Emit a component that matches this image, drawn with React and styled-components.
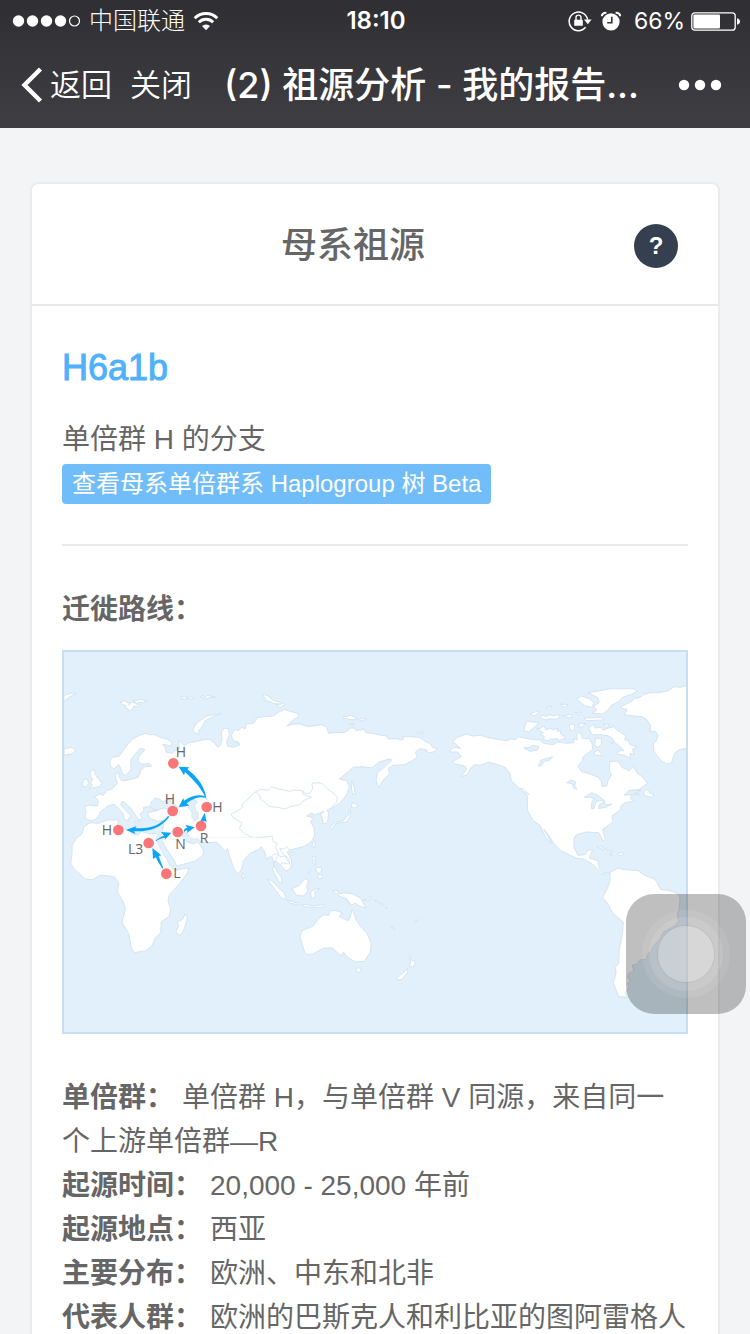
import React from "react";
import styled, { createGlobalStyle } from "styled-components";

const GlobalStyle = createGlobalStyle`
  * { box-sizing: border-box; }
  body {
    margin: 0;
    background: #f3f4f6;
    color: #666;
    font-family: "Liberation Sans", "Noto Sans CJK SC", sans-serif;
  }
  button { border: 0; padding: 0; margin: 0; background: none; color: inherit; font: inherit; cursor: pointer; }
  h1, h2, h3, p, dl, dd { margin: 0; }
`;

const Screen = styled.div`
  display: flex;
  flex-direction: column;
  height: 100vh;
`;

const TopBar = styled.header`
  flex: none;
  color: #fff;
  background: linear-gradient(#2f2e32, #3f3e42);
  font-family: Inter, "Noto Sans CJK SC", sans-serif;
`;

const StatusBar = styled.div`
  display: grid;
  grid-template-columns: 1fr auto 1fr;
  align-items: center;
  height: 42px;
  padding: 0 10px 0 12px;
  font-size: 24px;
  line-height: 42px;
`;

const StatusGroup = styled.div`
  display: flex;
  align-items: center;
  justify-content: ${(p) => (p.$end ? "flex-end" : "flex-start")};
  gap: 8px;
`;

const Carrier = styled.span`
  font-size: 24px;
  font-weight: 300;
`;

const Clock = styled.time`
  font-weight: 600;
`;

const Percent = styled.span`
  margin: 0 -2px 0 4px;
  font-size: 23px;
`;

const NavBar = styled.nav`
  display: flex;
  align-items: center;
  height: 86px;
  padding: 0 28px 0 20px;
`;

const NavButton = styled.button`
  display: flex;
  align-items: center;
  gap: 6px;
  flex: none;
  font-size: 31px;
  font-weight: 350;
  line-height: 44px;
  margin-right: 18px;
`;

const NavTitle = styled.h1`
  flex: 1;
  min-width: 0;
  margin-left: 14px;
  font-size: 36px;
  font-weight: 500;
  line-height: 44px;
  white-space: nowrap;
`;

const MoreButton = styled.button`
  display: flex;
  flex: none;
`;

const Content = styled.main`
  flex: 1;
  min-height: 0;
  overflow-y: auto;
  scrollbar-width: none;
  padding: 54px 30px;
`;

const Card = styled.article`
  background: #fff;
  border: 2px solid #ebebeb;
  border-radius: 8px;
`;

const CardHeader = styled.header`
  display: flex;
  align-items: center;
  height: 122px;
  padding: 4px 40px 0;
  border-bottom: 2px solid #e8e8e8;
`;

const CardTitle = styled.h2`
  flex: 1;
  text-align: center;
  font-size: 36px;
  font-weight: 500;
  line-height: 44px;
`;

const HelpButton = styled.button`
  width: 44px;
  height: 44px;
  border-radius: 50%;
  background: #353f4f;
  color: #fff;
  font-family: "Liberation Sans", sans-serif;
  font-size: 24px;
  font-weight: 700;
  line-height: 44px;
`;

const CardBody = styled.div`
  padding: 40px 30px;
  font-size: 28px;
  line-height: 44px;
`;

const Haplogroup = styled.h3`
  margin-bottom: 28px;
  color: #4fb1fa;
  font-size: 36px;
  font-weight: 400;
  line-height: 44px;
  -webkit-text-stroke: 1px #4fb1fa;
`;

const TreeLink = styled.a`
  display: block;
  width: fit-content;
  margin-top: 2px;
  padding: 0 10px;
  border-radius: 4px;
  background: #70bdf9;
  color: #fff;
  font-size: 24px;
  line-height: 40px;
  text-decoration: none;
`;

const Divider = styled.hr`
  height: 2px;
  margin: 40px 0 42px;
  border: 0;
  background: #ebebeb;
`;

const SectionTitle = styled.h3`
  margin-bottom: 18px;
  font-size: 28px;
  font-weight: 700;
  line-height: 44px;
`;

const MapFrame = styled.figure`
  margin: 0 0 42px;
  border: 2px solid #c9dff1;
  background: #e1f0fb;

  svg { display: block; width: 100%; height: auto; }
`;

const Term = styled.dt`
  display: inline;
  margin-right: 8px;
  font-weight: 700;
`;

const Detail = styled.dd`
  display: inline;
`;

const TouchButton = styled.button`
  position: fixed;
  right: 4px;
  bottom: 320px;
  width: 120px;
  height: 120px;
  border-radius: 28px;
  background: rgba(0, 0, 0, 0.25);

  svg { display: block; }
`;

const SignalDots = () => (
  <svg width="69" height="14" viewBox="0 0 69 14" fill="#fff" aria-hidden="true">
    <circle cx="6.5" cy="7" r="5.7" />
    <circle cx="20.5" cy="7" r="5.7" />
    <circle cx="34.5" cy="7" r="5.7" />
    <circle cx="48.5" cy="7" r="5.7" />
    <circle cx="62.5" cy="7" r="5" fill="none" stroke="#fff" strokeWidth="1.2" />
  </svg>
);

const WifiIcon = () => (
  <svg width="26" height="20" viewBox="0 0 26 20" fill="none" stroke="#fff" strokeWidth="2.9" aria-hidden="true">
    <path d="M1.7 7.2a16 16 0 0 1 22.6 0" />
    <path d="M5.8 11.3a10.2 10.2 0 0 1 14.4 0" />
    <path d="M13 19.2l-4-4.1a5.7 5.7 0 0 1 8 0z" fill="#fff" stroke="none" />
  </svg>
);

const RotationLockIcon = () => (
  <svg width="24" height="22" viewBox="0 0 24 22" fill="none" stroke="#fff" aria-hidden="true">
    <path d="M17.6 17.3A9.3 9.3 0 1 1 19.6 9.6" strokeWidth="1.5" />
    <path d="M16 9.6h7.6l-3.8 4.6z" fill="#fff" stroke="none" />
    <rect x="6.2" y="9.8" width="8.6" height="6" rx="0.6" fill="#fff" stroke="none" />
    <path d="M8 10V7.6a2.5 2.5 0 0 1 5 0V10" strokeWidth="1.4" />
  </svg>
);

const AlarmIcon = () => (
  <svg width="22" height="20" viewBox="0 0 22 20" fill="none" stroke="#fff" aria-hidden="true">
    <circle cx="11" cy="10.8" r="8.6" fill="#fff" stroke="none" />
    <path d="M1.8 5.3Q2 1.6 6.4 1.7M20.2 5.3Q20 1.6 15.6 1.7" strokeWidth="2" />
    <path d="M11.8 5.8v6H7.2" stroke="#333236" strokeWidth="1.6" />
  </svg>
);

const BatteryIcon = () => (
  <svg width="49" height="19" viewBox="0 0 49 19" aria-hidden="true">
    <rect x="0.8" y="0.8" width="43.4" height="17.4" rx="3" fill="none" stroke="#fff" strokeWidth="1.3" />
    <rect x="2.4" y="2.4" width="26.6" height="14.2" rx="1" fill="#fff" />
    <path d="M46 6.2q3 .8 3 3.3t-3 3.3z" fill="#fff" />
  </svg>
);

const BackIcon = () => (
  <svg width="24" height="38" viewBox="0 0 24 38" fill="none" stroke="#fff" strokeWidth="4.4" aria-hidden="true">
    <path d="M20.5 3L4.5 19l16 16" />
  </svg>
);

const MoreIcon = () => (
  <svg width="44" height="12" viewBox="0 0 44 12" fill="#fff" aria-hidden="true">
    <circle cx="6" cy="6" r="5.2" />
    <circle cx="22" cy="6" r="5.2" />
    <circle cx="38" cy="6" r="5.2" />
  </svg>
);

const EURASIA =
  "M75 535L78 515 73 500 88 495 112 498 115 482 104 470 118 462 130 466 140 452 158 446 172 430 166 412 168 400 175 398 178 412 185 422 205 420 235 412 244 388 255 380 275 378 268 370 245 373 234 362 236 350 250 336 254 328 240 325 228 340 213 358 212 372 214 385 208 396 196 406 188 402 181 382 176 374 163 386 151 380 150 362 158 352 178 348 190 332 203 312 222 294 240 286 256 280 268 284 285 284 300 292 322 298 337 308 332 318 308 312 316 324 318 336 336 340 345 332 358 326 356 302 364 308 372 318 388 308 410 304 436 298 450 298 462 308 474 322 482 314 486 300 484 276 494 264 506 266 508 286 500 305 502 318 520 322 540 314 532 304 538 310 518 300 514 285 526 268 534 272 545 262 556 266 558 252 580 250 590 238 586 234 610 230 640 228 660 214 668 212 672 208 690 214 714 220 716 230 700 240 680 258 700 252 720 252 745 260 770 256 786 254 800 262 806 280 830 277 852 278 864 272 868 264 884 264 888 272 912 268 918 278 936 280 960 285 980 288 984 297 1010 296 1024 300 1030 298 1028 290 1050 290 1078 292 1092 302 1112 312 1118 322 1132 326 1122 336 1104 338 1100 330 1080 326 1066 336 1072 352 1050 366 1034 374 1000 376 986 384 988 402 970 420 956 442 948 422 952 398 968 386 996 360 990 356 972 362 956 366 936 384 910 380 880 382 838 417 860 422 868 440 862 460 850 478 836 492 822 500 802 510 806 520 804 540 800 550 790 552 786 532 782 522 792 514 776 520 762 526 756 518 740 528 760 534 752 546 762 564 764 584 758 600 745 612 730 620 705 626 690 630 682 636 694 658 696 675 686 690 676 692 668 682 654 668 644 662 640 672 652 696 664 712 666 732 656 724 646 704 638 690 642 672 636 650 624 652 620 660 614 636 604 620 596 628 570 640 550 662 547 682 540 694 532 703 520 682 506 640 503 626 494 634 480 616 468 606 444 608 424 606 414 596 398 598 380 580 368 576 366 588 380 604 398 612 412 606 420 614 432 634 426 648 404 664 350 678 344 664 328 640 306 604 300 590 308 574 310 556 308 541 294 544 268 534 262 518 292 512 288 504 268 500 250 502 252 512 240 522 248 536 236 540 224 522 212 504 192 486 186 484 182 494 206 520 214 528 204 536 206 544 192 538 190 522 172 502 162 492 140 500 132 508 120 516 116 528 104 540 90 542 Z";

const AFRICA =
  "M90 548L116 550 142 540 176 540 172 556 190 566 210 572 216 582 236 584 244 574 270 582 288 580 294 586 288 598 310 640 334 682 344 692 368 686 388 684 380 702 360 730 328 764 324 784 332 806 328 828 304 846 302 878 286 894 276 918 258 932 224 938 214 924 206 880 186 848 196 808 190 786 172 756 176 728 164 712 148 708 120 706 96 720 74 716 42 686 32 672 36 640 36 616 50 594 66 582 72 560 Z";

const OLD_WORLD_ISLANDS = [
  "M375 822L382 832 376 858 366 882 354 886 348 874 356 858 352 846 368 838Z",
  "M92 392L104 388 106 404 118 420 126 430 118 440 88 446 98 436 92 430 98 416 90 408Z",
  "M70 420L82 416 86 430 80 440 66 440Z",
  "M12 326L36 322 46 332 34 342 12 346Z",
  "M12 166L34 160 50 160 30 170 12 184Z",
  "M180 184L188 186 194 180 200 188 206 186 208 196 214 186 226 190 232 194 242 196 236 200 222 198 218 206 208 214 204 206 194 202 198 196 186 194ZM218 180L228 182 240 178 246 180 262 182 250 188 240 186 230 190Z",
  "M398 272L404 258 414 246 440 228 486 220 460 230 438 240 424 262 416 272 418 284 408 280Z",
  "M608 168L614 164 628 170 634 178 642 182 662 186 656 192 640 190 628 184 612 182 618 176Z",
  "M646 192L658 194 670 190 674 196 660 202Z",
  "M850 228L862 230 870 226 882 230 892 236 876 240 862 236 850 236ZM896 238L908 236 920 238 914 242 898 242ZM868 252L882 252 874 256Z",
  "M362 172L374 168 378 174 390 170 404 174 396 178 384 176 372 178ZM420 170L430 166 434 172 444 166 468 172 452 172 440 176 430 174Z",
  "M1072 276L1092 276 1088 280 1074 280Z",
  "M876 424L882 438 886 464 878 462 874 444Z",
  "M876 488L896 496 884 504 874 502Z",
  "M872 508L870 530 860 546 842 548 826 552 816 568 810 562 824 548 850 542 866 524 868 508Z",
  "M758 608L766 602 764 622 756 620Z",
  "M696 636L704 640 700 646 694 642Z",
  "M548 698L554 706 552 714 546 712Z",
  "M758 650L766 648 764 666 768 676 758 668ZM766 684L784 682 784 694 774 702ZM774 706L788 704 786 716 772 714ZM744 696L754 688 746 704Z",
  "M622 718L636 722 654 742 672 758 680 778 664 774 640 742Z",
  "M680 780L700 786 718 790 716 794 690 790Z",
  "M724 795L740 793 756 798 776 796 792 794 788 802 756 802 734 800Z",
  "M696 746L718 736 734 716 746 722 740 740 744 752 730 768 710 766Z",
  "M752 756L766 746 782 744 764 754 766 770 754 776Z",
  "M818 752L832 750 836 762 852 758 878 762 902 774 910 790 918 804 896 798 886 790 872 796 862 778 838 768Z",
  "M908 780L924 776 930 768 934 774 922 782ZM944 780L952 782 958 788 952 788ZM962 790L972 794 982 804 974 802Z",
  "M992 858L1006 868 1002 870ZM1064 846L1076 838 1072 846Z",
  "M876 808L884 824 888 840 904 862 920 878 930 900 934 912 930 938 916 960 914 964 888 966 862 952 850 936 844 948 834 940 818 924 792 924 758 942 742 944 734 938 720 890 726 872 760 858 774 838 790 824 806 826 812 812 828 812 846 818 838 830 864 842 870 834Z",
  "M888 984L904 984 900 996 892 998Z",
  "M1048 950L1056 962 1068 964 1060 982 1048 978 1052 966Z",
  "M1008 1016L1032 996 1044 984 1042 998 1026 1018 1010 1020Z",
  "M224 546L236 542 238 548 226 550ZM300 546L308 542 304 548Z",
];

const SEAS = [
  "M270 498L274 486 286 474 300 478 308 486 318 480 324 476 334 484 352 500 354 508 334 510 314 504 292 510 278 508Z",
  "M386 488L398 478 412 484 404 496 406 510 414 518 414 536 404 542 396 532 396 516 386 504Z",
];

const BORDERS =
  "M513 522L530 514 548 502 546 492 556 486 574 466 586 456 602 448 616 450 626 450 634 440 652 446 690 454 700 450 728 452 734 460 750 460 758 446 756 430 770 428 786 430 800 444 816 456 832 470 830 486 816 500M586 456L598 464 602 478 616 488 630 500 652 502 676 507 690 500 720 494 730 482 744 476 756 472 730 464 728 452M513 522L520 534 546 548 538 566 552 580 576 592 600 592 626 590 636 588 640 606 652 610 646 622 656 640 648 660M664 634L660 626 674 626 682 620 690 630M636 646L652 640 660 650 678 648 680 660 690 668M664 634L672 646 686 656 690 676M662 676L666 668 682 672 690 666";

const TILE_SEAM = "M364 593L590 593";

const AMERICA_NORTH =
  "M30 270L44 262 62 265 38 245 52 232 80 222 98 228 122 226 150 234 200 242 214 236 226 240 236 230 262 236 300 240 310 250 340 254 352 246 380 250 402 248 400 236 412 240 410 224 420 216 428 236 448 236 456 250 458 268 430 290 426 304 414 318 424 334 450 342 476 352 484 364 486 380 500 378 504 362 514 346 508 330 510 304 534 304 546 322 568 332 580 318 592 340 606 350 622 370 598 388 572 392 552 406 574 400 572 416 584 424 556 428 544 436 540 450 516 468 520 486 488 508 496 538 490 544 476 518 440 516 410 524 402 534 402 562 414 586 434 584 444 570 458 570 448 594 474 602 478 628 490 640 508 636 506 642 484 642 460 614 434 598 408 594 362 572 340 548 322 520 312 508 330 540 336 552 316 530 300 496 280 482 262 450 262 408 240 386 214 362 210 340 196 322 166 312 146 306 122 316 104 314 94 322 82 344 62 350 80 328 74 318 46 312 38 304 64 290 52 276 32 276Z";

const NORTH_ISLANDS = [
  "M744 76L720 82 702 80 684 92 656 98 630 98 610 104 600 112 582 116 578 122 540 142 562 150 552 164 580 168 606 170 622 180 632 198 630 216 646 214 654 226 650 240 640 252 642 276 662 300 678 312 694 310 704 280 716 270 744 264Z",
  "M444 98L480 92 512 86 580 86 592 94 572 104 548 112 534 126 514 136 504 150 488 162 456 160 470 150 460 138 478 128 472 112Z",
  "M410 118L424 108 448 116 462 128 456 142 436 138Z",
  "M432 174L488 172 490 180 440 182ZM406 158L422 158 418 166Z",
  "M270 162L290 154 300 154 284 168ZM300 168L312 166 318 170 330 164 340 168 356 164 358 174 344 178 330 176 318 180 304 176ZM360 132L384 134 374 142ZM318 142L336 138 326 148ZM364 166L378 168 390 162 398 174 378 172Z",
  "M256 192L262 184 298 188 284 200 266 216 252 212Z",
  "M290 206L300 206 312 198 318 210 330 204 340 210 352 204 352 214 362 212 362 222 378 234 358 242 350 236 332 238 324 242 306 238 314 230 300 224 310 218Z",
  "M386 194L402 192 404 206 394 214ZM414 192L436 190 424 204Z",
  "M446 204L460 192 466 204 482 202 490 210 500 206 520 200 534 212 558 228 554 238 566 244 570 254 592 260 578 268 582 284 570 280 570 296 554 286 530 282 540 272 552 272 536 256 524 248 518 236 506 228 484 224 456 224Z",
  "M466 236L484 234 484 252 476 262 464 258ZM462 276L474 270 488 286 466 286ZM508 246L520 246 516 252ZM488 192L510 194 500 202Z",
  "M610 400L620 388 628 398 642 404 636 412 616 408Z",
  "M470 560L484 560 496 566 486 568ZM500 570L518 574 508 578ZM536 578L552 580 546 588 534 584ZM508 582L518 584 510 588Z",
  "M240 386L250 386 268 404 258 400Z",
];

const NORTH_LAKES = [
  "M252 264L270 262 278 256 296 260 292 270 270 274Z",
  "M294 318L304 300 338 290 330 300 314 304 304 316Z",
  "M380 368L394 360 408 366 404 376 410 388 400 384 398 372Z",
  "M432 412L456 398 476 408 496 424 480 422 468 424 462 446 454 446 456 424 464 416 450 412ZM478 434L492 426 498 434 516 432 498 442 476 446Z",
  "M556 404L566 392 584 390 604 392 584 400 600 404Z",
];

const AMERICA_SOUTH =
  "M150 126L160 122 174 114 186 118 234 122 254 136 280 146 288 152 302 178 330 182 356 192 360 204 358 236 352 252 356 276 340 290 310 306 300 326 278 352 274 364 264 372 258 388 240 390 232 402 216 406 222 424 206 430 202 440 210 452 202 462 208 468 196 490 204 502 176 500 160 458 168 430 166 412 176 400 178 358 186 320 190 276 158 250 146 226 128 202 140 180 150 154Z";

const STOPS = [
  { label: "H", x: 340, y: 370, tx: 347, ty: 352 },
  { label: "H", x: 338, y: 513, tx: 314, ty: 492 },
  { label: "H", x: 440, y: 501, tx: 457, ty: 516 },
  { label: "H", x: 175, y: 570, tx: 125, ty: 585 },
  { label: "R", x: 423, y: 558, tx: 419, ty: 610 },
  { label: "N", x: 353, y: 576, tx: 346, ty: 628 },
  { label: "L3", x: 266, y: 609, tx: 204, ty: 643 },
  { label: "L", x: 319, y: 701, tx: 340, ty: 715 },
];

const ROUTES = [
  "M440 484Q436 428 382 388L388 382 356 380 372 406 375 396Q424 440 438 476Z",
  "M438 470Q410 458 372 482L370 474 356 502 387 497 380 490Q410 468 434 473Z",
  "M324 528Q290 570 226 564L230 558 198 570 226 582 222 574Q296 576 328 530Z",
  "M310 684Q300 660 296 648L304 646 277 624 279 657 287 652Q298 674 308 686Z",
  "M286 602Q304 588 312 587L303 576 334 578 314 600 315 593Q300 594 288 603Z",
  "M371 570Q380 562 383 564L376 554 404 562 380 580 383 572Q378 568 373 576Z",
  "M420 545L434 518 440 547 432 542 428 549Z",
];

const Shapes = ({ paths, ...rest }) => (
  <g {...rest}>
    {paths.map((d) => (
      <path key={d} d={d} />
    ))}
  </g>
);

const MigrationMap = () => (
  <svg viewBox="12 36 1866 1140" role="img" aria-label="迁徙路线">
    <g fill="#fff" stroke="#d3e4f2" strokeWidth="3" strokeLinejoin="round">
      <path d={EURASIA} />
      <path d={AFRICA} />
      <Shapes paths={OLD_WORLD_ISLANDS} />
      <Shapes paths={SEAS} fill="#e1f0fb" />
      <path d={BORDERS} fill="none" stroke="#d8e7f3" />
      <path d={TILE_SEAM} stroke="#f2f6fa" />
      <g transform="translate(1500 570)">
        <path d={AMERICA_SOUTH} />
      </g>
      <g transform="translate(1140 60)">
        <path d={AMERICA_NORTH} />
        <Shapes paths={NORTH_ISLANDS} />
        <Shapes paths={NORTH_LAKES} fill="#e1f0fb" />
      </g>
    </g>
    <Shapes paths={ROUTES} fill="#0ba5f5" />
    {STOPS.map((s) => (
      <g key={`${s.x}-${s.y}`}>
        <circle cx={s.x} cy={s.y} r="16" fill="#fa7679" />
        <text x={s.tx} y={s.ty} fill="#666" fontFamily="'Open Sans', sans-serif" fontSize="42">
          {s.label}
        </text>
      </g>
    ))}
  </svg>
);

const FACTS = [
  ["单倍群：", "单倍群 H，与单倍群 V 同源，来自同一个上游单倍群—R"],
  ["起源时间：", "20,000 - 25,000 年前"],
  ["起源地点：", "西亚"],
  ["主要分布：", "欧洲、中东和北非"],
  ["代表人群：", "欧洲的巴斯克人和利比亚的图阿雷格人"],
];

export default function App() {
  return (
    <Screen lang="zh-CN">
      <GlobalStyle />
      <TopBar>
        <StatusBar>
          <StatusGroup>
            <SignalDots />
            <Carrier>中国联通</Carrier>
            <WifiIcon />
          </StatusGroup>
          <Clock>18:10</Clock>
          <StatusGroup $end>
            <RotationLockIcon />
            <AlarmIcon />
            <Percent>66%</Percent>
            <BatteryIcon />
          </StatusGroup>
        </StatusBar>
        <NavBar>
          <NavButton type="button">
            <BackIcon />
            返回
          </NavButton>
          <NavButton type="button">关闭</NavButton>
          <NavTitle>(2) 祖源分析 - 我的报告...</NavTitle>
          <MoreButton type="button" aria-label="更多">
            <MoreIcon />
          </MoreButton>
        </NavBar>
      </TopBar>
      <Content>
        <Card>
          <CardHeader>
            <CardTitle>母系祖源</CardTitle>
            <HelpButton type="button">?</HelpButton>
          </CardHeader>
          <CardBody>
            <Haplogroup>H6a1b</Haplogroup>
            <p>单倍群 H 的分支</p>
            <TreeLink href="#tree">查看母系单倍群系 Haplogroup 树 Beta</TreeLink>
            <Divider />
            <SectionTitle>迁徙路线：</SectionTitle>
            <MapFrame>
              <MigrationMap />
            </MapFrame>
            <dl>
              {FACTS.map(([term, detail]) => (
                <div key={term}>
                  <Term>{term}</Term>
                  <Detail>{detail}</Detail>
                </div>
              ))}
            </dl>
          </CardBody>
        </Card>
      </Content>
      <TouchButton type="button" aria-label="AssistiveTouch">
        <svg width="120" height="120" viewBox="0 0 120 120" fill="#fff" aria-hidden="true">
          <circle cx="60" cy="60" r="44" fillOpacity="0.08" />
          <circle cx="60" cy="60" r="37" fillOpacity="0.1" />
          <circle cx="60" cy="60" r="28.5" fillOpacity="0.26" stroke="#000" strokeOpacity="0.08" />
        </svg>
      </TouchButton>
    </Screen>
  );
}
